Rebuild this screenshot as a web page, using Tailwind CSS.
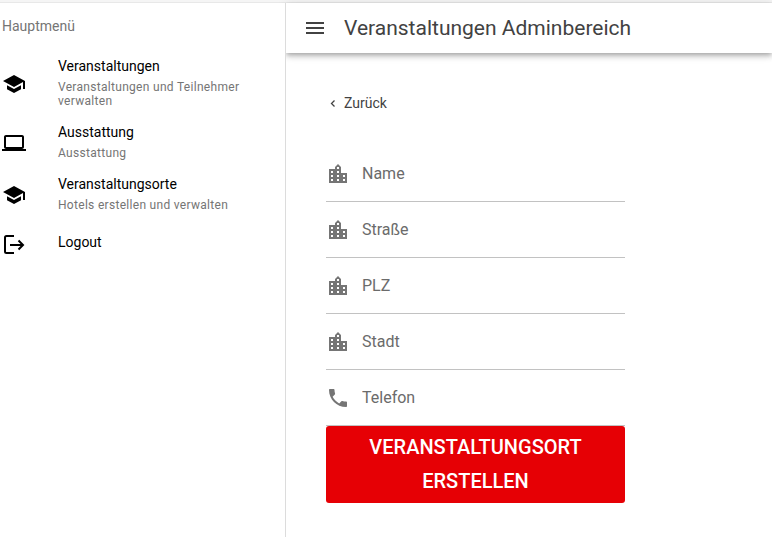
<!DOCTYPE html>
<html lang="de">
<head>
  <meta charset="UTF-8" />
  <meta name="viewport" content="width=device-width, initial-scale=1.0" />
  <title>Veranstaltungen Adminbereich</title>
  <script src="https://cdn.jsdelivr.net/npm/@tailwindcss/browser@4"></script>
</head>
<body class="min-h-screen flex flex-col bg-white text-black font-['Roboto',sans-serif]">

  <!-- Icons -->
  <svg class="hidden">
    <symbol id="school" viewBox="0 0 24 24"><path d="M5 13.18v4L12 21l7-3.82v-4L12 17l-7-3.82zM12 3L1 9l11 6 9-4.91V17h2V9L12 3z"/></symbol>
    <symbol id="laptop" viewBox="0 0 24 24"><path d="M20 18c1.1 0 1.99-.9 1.99-2L22 6c0-1.1-.9-2-2-2H4c-1.1 0-2 .9-2 2v10c0 1.1.9 2 2 2H0v2h24v-2h-4zM4 6h16v10H4V6z"/></symbol>
    <symbol id="logout" viewBox="0 0 24 24"><path fill="none" stroke="currentColor" stroke-width="2" d="M12 3H4.500Q3 3 3 4.500V18.500Q3 20 4.500 20H12M8 12H21M16.500 7.500L21 12L16.500 16.500"/></symbol>
    <symbol id="city" viewBox="0 0 24 24"><path d="M15 11V5l-3-3-3 3v2H3v14h18V11h-6zm-8 8H5v-2h2v2zm0-4H5v-2h2v2zm0-4H5V9h2v2zm6 8h-2v-2h2v2zm0-4h-2v-2h2v2zm0-4h-2V9h2v2zm0-4h-2V5h2v2zm6 12h-2v-2h2v2zm0-4h-2v-2h2v2z"/></symbol>
    <symbol id="phone" viewBox="0 0 24 24"><path d="M6.620 10.790c1.440 2.830 3.760 5.140 6.590 6.590l2.200-2.200c.27-.27.67-.36 1.020-.24 1.120.37 2.330.57 3.570.57.55 0 1 .45 1 1V20c0 .55-.45 1-1 1-9.390 0-17-7.610-17-17 0-.55.45-1 1-1h3.500c.55 0 1 .45 1 1 0 1.250.2 2.450.57 3.570.11.35.03.74-.25 1.020l-2.200 2.200z"/></symbol>
  </svg>

  <div class="h-[3px] bg-[#f5f5f5] border-b border-[#e8e8e8]"></div>

  <div class="flex flex-1">
    <aside class="relative z-10 w-[286px] shrink-0 bg-white border-r border-[#dcdcdc]">
      <h2 class="h-12 px-[2px] pb-[2px] flex items-center text-sm text-[#757575]">Hauptmenü</h2>
      <nav>
        <a href="#" class="flex items-center pl-[2px] pr-4">
          <svg class="size-6 mr-8 shrink-0" fill="currentColor"><use href="#school"/></svg>
          <span class="pt-[7px] pb-[9px]">
            <span class="block text-sm leading-4">Veranstaltungen</span>
            <span class="block mt-[6px] text-xs leading-[14px] tracking-wide text-[#757575]">Veranstaltungen und Teilnehmer verwalten</span>
          </span>
        </a>
        <a href="#" class="flex items-center pl-[2px] pr-4">
          <svg class="size-6 mr-8 shrink-0" fill="currentColor"><use href="#laptop"/></svg>
          <span class="pt-[7px] pb-[9px]">
            <span class="block text-sm leading-4">Ausstattung</span>
            <span class="block mt-[6px] text-xs leading-[14px] tracking-wide text-[#757575]">Ausstattung</span>
          </span>
        </a>
        <a href="#" class="flex items-center pl-[2px] pr-4">
          <svg class="size-6 mr-8 shrink-0" fill="currentColor"><use href="#school"/></svg>
          <span class="pt-[7px] pb-[9px]">
            <span class="block text-sm leading-4">Veranstaltungsorte</span>
            <span class="block mt-[6px] text-xs leading-[14px] tracking-wide text-[#757575]">Hotels erstellen und verwalten</span>
          </span>
        </a>
        <a href="#" class="flex items-center h-12 pl-[2px] pr-4">
          <svg class="size-6 mr-8 shrink-0" fill="currentColor"><use href="#logout"/></svg>
          <span class="pb-[6px] text-sm leading-4">Logout</span>
        </a>
      </nav>
    </aside>

    <div class="flex-1 min-w-0">
      <header class="h-[50px] flex items-center pl-[17px] bg-white text-[#424242] shadow-[0_2px_4px_-1px_rgba(0,0,0,0.2),0_4px_5px_rgba(0,0,0,0.14),0_1px_10px_rgba(0,0,0,0.12)]">
        <button type="button" aria-label="Menü" class="mr-[17px]">
          <svg class="size-6" viewBox="0 0 24 24" fill="currentColor"><path d="M3 18h18v-2H3v2zm0-5h18v-2H3v2zm0-7v2h18V6H3z"/></svg>
        </button>
        <h1 class="text-[21px] leading-8">Veranstaltungen Adminbereich</h1>
      </header>

      <main class="px-10 pt-10">
        <a href="#" class="flex items-center w-fit h-5 text-sm text-[#424242]">
          <svg class="w-[14px] h-[14px] mr-1" viewBox="0 0 14 14" fill="none" stroke="currentColor" stroke-width="1.300"><path d="M8.500 4.500L5.500 7.500L8.500 10.500"/></svg>
          Zurück
        </a>

        <form class="mt-[33px] max-w-[299px]">
          <label class="flex items-center h-14 border-b border-[#c2c2c2] text-[#757575]">
            <svg class="size-6 mr-3 shrink-0" fill="currentColor"><use href="#city"/></svg>
            <input type="text" aria-label="Name" placeholder="Name" class="w-full min-w-0 outline-none placeholder:text-[#6b6b6b]" />
          </label>
          <label class="flex items-center h-14 border-b border-[#c2c2c2] text-[#757575]">
            <svg class="size-6 mr-3 shrink-0" fill="currentColor"><use href="#city"/></svg>
            <input type="text" aria-label="Straße" placeholder="Straße" class="w-full min-w-0 outline-none placeholder:text-[#6b6b6b]" />
          </label>
          <label class="flex items-center h-14 border-b border-[#c2c2c2] text-[#757575]">
            <svg class="size-6 mr-3 shrink-0" fill="currentColor"><use href="#city"/></svg>
            <input type="text" aria-label="PLZ" placeholder="PLZ" class="w-full min-w-0 outline-none placeholder:text-[#6b6b6b]" />
          </label>
          <label class="flex items-center h-14 border-b border-[#c2c2c2] text-[#757575]">
            <svg class="size-6 mr-3 shrink-0" fill="currentColor"><use href="#city"/></svg>
            <input type="text" aria-label="Stadt" placeholder="Stadt" class="w-full min-w-0 outline-none placeholder:text-[#6b6b6b]" />
          </label>
          <label class="flex items-center h-14 border-b border-[#c2c2c2] text-[#757575]">
            <svg class="size-6 mr-3 shrink-0" fill="currentColor"><use href="#phone"/></svg>
            <input type="tel" aria-label="Telefon" placeholder="Telefon" class="w-full min-w-0 outline-none placeholder:text-[#6b6b6b]" />
          </label>
          <button type="submit" class="w-full px-4 pt-1 pb-[5px] rounded-[3px] bg-[#e60005] text-white text-xl leading-[34px] font-medium uppercase">Veranstaltungsort erstellen</button>
        </form>
      </main>
    </div>
  </div>

</body>
</html>
